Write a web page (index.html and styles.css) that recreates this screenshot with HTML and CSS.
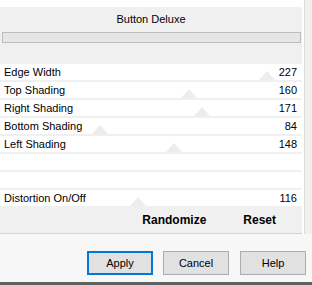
FILE: index.html
```html
<!DOCTYPE html>
<html lang="en">
<head>
    <meta charset="UTF-8">
    <title>Button Deluxe</title>
    <link rel="stylesheet" href="styles.css">
</head>
<body>

    <div class="dialog">

        <div class="top">
            <section class="panel">
                <div class="title">Button Deluxe</div>
                <div class="progress"></div>

                <div class="rows">
                    <div class="row">
                        <span class="label">Edge Width</span>
                        <span class="thumb" style="left: 267px"></span>
                        <span class="value">227</span>
                    </div>
                    <div class="row">
                        <span class="label">Top Shading</span>
                        <span class="thumb" style="left: 189px"></span>
                        <span class="value">160</span>
                    </div>
                    <div class="row">
                        <span class="label">Right Shading</span>
                        <span class="thumb" style="left: 202px"></span>
                        <span class="value">171</span>
                    </div>
                    <div class="row">
                        <span class="label">Bottom Shading</span>
                        <span class="thumb" style="left: 100px"></span>
                        <span class="value">84</span>
                    </div>
                    <div class="row">
                        <span class="label">Left Shading</span>
                        <span class="thumb" style="left: 174px"></span>
                        <span class="value">148</span>
                    </div>
                    <div class="row"></div>
                    <div class="row"></div>
                    <div class="row">
                        <span class="label">Distortion On/Off</span>
                        <span class="thumb" style="left: 138px"></span>
                        <span class="value">116</span>
                    </div>
                </div>

                <div class="actions">
                    <span class="action">Randomize</span>
                    <span class="action">Reset</span>
                </div>
            </section>
            <div class="gutter"></div>
        </div>

        <footer class="footer">
            <button class="btn btn-default">Apply</button>
            <button class="btn">Cancel</button>
            <button class="btn btn-help">Help</button>
        </footer>

    </div>

</body>
</html>
```

FILE: styles.css
```css
/* --- Base --- */
:root {
    --panel-bg: #f0f0f0;
    --row-bg: #ffffff;
    --text: #000000;
    --btn-bg: #e1e1e1;
    --btn-border: #adadad;
    --accent: #0078d7;
}

body, html {
    margin: 0;
    padding: 0;
    background: #ffffff;
    font-family: 'Liberation Sans', Arial, sans-serif;
    font-size: 11px;
    color: var(--text);
    overflow: hidden;
}

.dialog {
    width: 312px;
    height: 285px;
    display: flex;
    flex-direction: column;
    box-sizing: border-box;
    border-bottom: 3px solid #5f5f5f;
}

/* --- Top area: settings panel + side strip --- */
.top {
    display: flex;
    height: 234px;
}

.panel {
    width: 302px;
    margin-top: 7px;
    background: var(--panel-bg);
    border-bottom: 1px solid #d4d4d4;
    display: flex;
    flex-direction: column;
}

.gutter {
    flex: 1;
    margin-left: 2px;
    border-left: 1px solid #dcdcdc;
    background: var(--panel-bg);
}

.title {
    height: 25px;
    line-height: 25px;
    text-align: center;
}

.progress {
    height: 9px;
    margin: 0 1px 0 2px;
    border: 1px solid #bcbcbc;
    background: #e6e6e6;
}

/* --- Slider rows --- */
.rows {
    display: flex;
    flex-direction: column;
    gap: 2px;
    margin-top: 21px;
}

.row {
    position: relative;
    height: 16px;
    background: var(--row-bg);
    display: flex;
    align-items: center;
    justify-content: space-between;
    padding: 0 5px 0 4px;
    overflow: hidden;
}

.label, .value {
    position: relative;
    z-index: 1;
}

/* slider thumb peeking up from the row's bottom edge */
.thumb {
    position: absolute;
    bottom: 0;
    width: 0;
    height: 0;
    margin-left: -8px;
    border-left: 8px solid transparent;
    border-right: 8px solid transparent;
    border-bottom: 9px solid #ededed;
}

/* --- Randomize / Reset --- */
.actions {
    flex: 1;
    display: flex;
    justify-content: flex-end;
    align-items: center;
    gap: 37px;
    padding: 1px 26px 0 0;
}

.action {
    font-size: 12px;
    font-weight: 700;
}

/* --- Dialog buttons --- */
.footer {
    flex: 1;
    display: flex;
    justify-content: flex-end;
    align-items: flex-start;
    gap: 10px;
    padding: 17px 6px 0 0;
    background: #f7f7f7;
}

.btn {
    width: 66px;
    height: 24px;
    box-sizing: border-box;
    padding: 0;
    font-family: 'Liberation Sans', Arial, sans-serif;
    font-size: 11px;
    color: var(--text);
    background: var(--btn-bg);
    border: 1px solid var(--btn-border);
    border-radius: 0;
}

.btn-default {
    border: 2px solid var(--accent);
}

.btn-help {
    margin-left: 1px;
}
```
